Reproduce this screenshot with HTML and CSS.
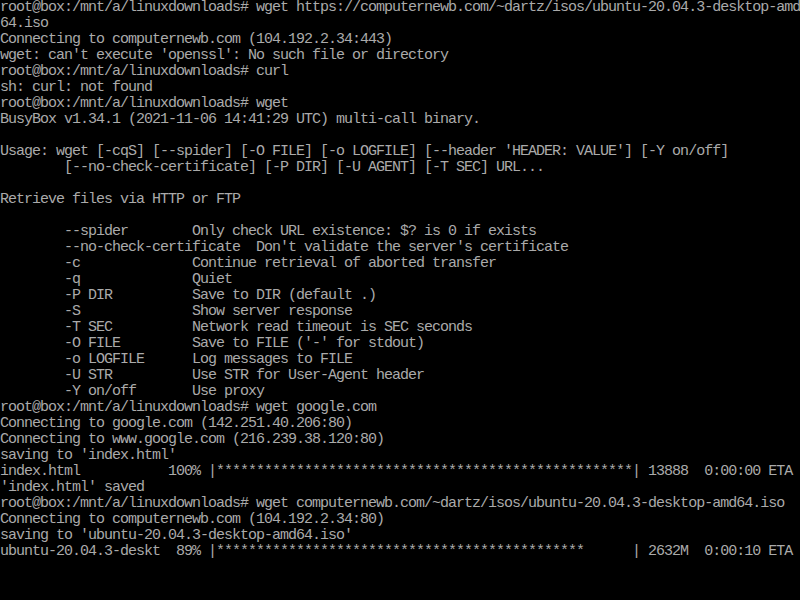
FILE: index.html
```
<!DOCTYPE html>
<html>
<head>
<meta charset="utf-8">
<link rel="stylesheet" href="styles.css">
</head>
<body>
<pre class="console">root@box:/mnt/a/linuxdownloads# wget https://computernewb.com/~dartz/isos/ubuntu-20.04.3-desktop-amd
64.iso
Connecting to computernewb.com (104.192.2.34:443)
wget: can't execute 'openssl': No such file or directory
root@box:/mnt/a/linuxdownloads# curl
sh: curl: not found
root@box:/mnt/a/linuxdownloads# wget
BusyBox v1.34.1 (2021-11-06 14:41:29 UTC) multi-call binary.

Usage: wget [-cqS] [--spider] [-O FILE] [-o LOGFILE] [--header 'HEADER: VALUE'] [-Y on/off]
        [--no-check-certificate] [-P DIR] [-U AGENT] [-T SEC] URL...

Retrieve files via HTTP or FTP

        --spider        Only check URL existence: $? is 0 if exists
        --no-check-certificate  Don't validate the server's certificate
        -c              Continue retrieval of aborted transfer
        -q              Quiet
        -P DIR          Save to DIR (default .)
        -S              Show server response
        -T SEC          Network read timeout is SEC seconds
        -O FILE         Save to FILE ('-' for stdout)
        -o LOGFILE      Log messages to FILE
        -U STR          Use STR for User-Agent header
        -Y on/off       Use proxy
root@box:/mnt/a/linuxdownloads# wget google.com
Connecting to google.com (142.251.40.206:80)
Connecting to www.google.com (216.239.38.120:80)
saving to 'index.html'
index.html           100% |****************************************************| 13888  0:00:00 ETA
'index.html' saved
root@box:/mnt/a/linuxdownloads# wget computernewb.com/~dartz/isos/ubuntu-20.04.3-desktop-amd64.iso
Connecting to computernewb.com (104.192.2.34:80)
saving to 'ubuntu-20.04.3-desktop-amd64.iso'
ubuntu-20.04.3-deskt  89% |**********************************************      | 2632M  0:00:10 ETA</pre>
</body>
</html>
```
FILE: styles.css
```
html, body {
  margin: 0;
  padding: 0;
  background: #000000;
  width: 800px;
  height: 600px;
  overflow: hidden;
}

.console {
  margin: 0;
  padding: 0;
  color: #aaaaaa;
  font-family: "Liberation Mono", "DejaVu Sans Mono", monospace;
  font-size: 15px;
  letter-spacing: -1px;
  line-height: 16px;
  white-space: pre;
}
```
